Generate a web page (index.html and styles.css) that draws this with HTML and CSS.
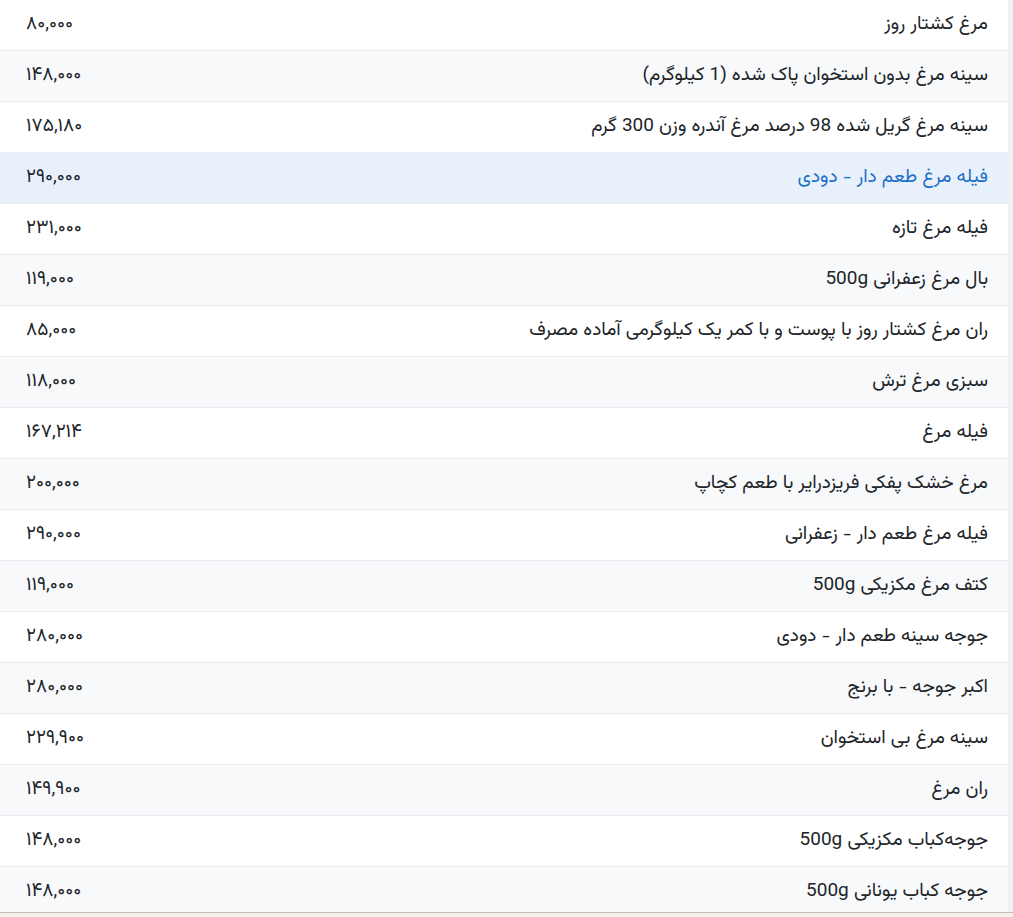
FILE: index.html
```html
<!DOCTYPE html>
<html lang="fa" dir="rtl">
<head>
<meta charset="utf-8">
<link rel="stylesheet" href="styles.css">
</head>
<body>
<div class="page">
  <div class="viewport">
    <div class="table">
      <div class="row"><span class="name">مرغ کشتار روز</span><span class="price">۸۰,۰۰۰</span></div>
      <div class="row"><span class="name">سینه مرغ بدون استخوان پاک شده (1 کیلوگرم)</span><span class="price">۱۴۸,۰۰۰</span></div>
      <div class="row"><span class="name">سینه مرغ گریل شده 98 درصد مرغ آندره وزن 300 گرم</span><span class="price">۱۷۵,۱۸۰</span></div>
      <div class="row active"><span class="name">فیله مرغ طعم دار - دودی</span><span class="price">۲۹۰,۰۰۰</span></div>
      <div class="row"><span class="name">فیله مرغ تازه</span><span class="price">۲۳۱,۰۰۰</span></div>
      <div class="row"><span class="name">بال مرغ زعفرانی 500g</span><span class="price">۱۱۹,۰۰۰</span></div>
      <div class="row"><span class="name">ران مرغ کشتار روز با پوست و با کمر یک کیلوگرمی آماده مصرف</span><span class="price">۸۵,۰۰۰</span></div>
      <div class="row"><span class="name">سبزی مرغ ترش</span><span class="price">۱۱۸,۰۰۰</span></div>
      <div class="row"><span class="name">فیله مرغ</span><span class="price">۱۶۷,۲۱۴</span></div>
      <div class="row"><span class="name">مرغ خشک پفکی فریزدرایر با طعم کچاپ</span><span class="price">۲۰۰,۰۰۰</span></div>
      <div class="row"><span class="name">فیله مرغ طعم دار - زعفرانی</span><span class="price">۲۹۰,۰۰۰</span></div>
      <div class="row"><span class="name">کتف مرغ مکزیکی 500g</span><span class="price">۱۱۹,۰۰۰</span></div>
      <div class="row"><span class="name">جوجه سینه طعم دار - دودی</span><span class="price">۲۸۰,۰۰۰</span></div>
      <div class="row"><span class="name">اکبر جوجه - با برنج</span><span class="price">۲۸۰,۰۰۰</span></div>
      <div class="row"><span class="name">سینه مرغ بی استخوان</span><span class="price">۲۲۹,۹۰۰</span></div>
      <div class="row"><span class="name">ران مرغ</span><span class="price">۱۴۹,۹۰۰</span></div>
      <div class="row"><span class="name">جوجه‌کباب مکزیکی 500g</span><span class="price">۱۴۸,۰۰۰</span></div>
      <div class="row"><span class="name">جوجه کباب یونانی 500g</span><span class="price">۱۴۸,۰۰۰</span></div>
    </div>
  </div>
  <div class="footer"></div>
</div>
</body>
</html>
```

FILE: styles.css
```css
html, body {
  margin: 0;
  padding: 0;
}
body {
  width: 1013px;
  height: 917px;
  overflow: hidden;
  background: #f1f2f4;
  font-family: "Vazirmatn", "Vazir", "Noto Sans Arabic", "DejaVu Sans", sans-serif;
  color: #212529;
}
.page {
  display: flex;
  flex-direction: column;
  height: 917px;
}
.viewport {
  height: 912px;
  overflow: hidden;
  display: flex;
  flex-direction: row;
  direction: ltr;
}
.table {
  width: 1008px;
  display: flex;
  flex-direction: column;
  flex: none;
  direction: rtl;
}
.row {
  height: 50px;
  border-bottom: 1px solid #e9ebee;
  display: flex;
  align-items: center;
  justify-content: space-between;
  padding: 0 20px 0 26px;
  background: #ffffff;
  flex: none;
}
.row:nth-child(even) {
  background: #f8f9fb;
}
.row.active {
  background: #e8f1fb;
}
.row.active .name {
  color: #1b6fca;
}
.name {
  font-size: 19px;
  white-space: nowrap;
  margin-top: -2px;
}
.price {
  font-size: 19px;
  direction: ltr;
  text-align: left;
  margin-top: -2px;
}
.footer {
  height: 4px;
  border-top: 1px solid #c9bdb5;
  background: #f6eee9;
}
```
